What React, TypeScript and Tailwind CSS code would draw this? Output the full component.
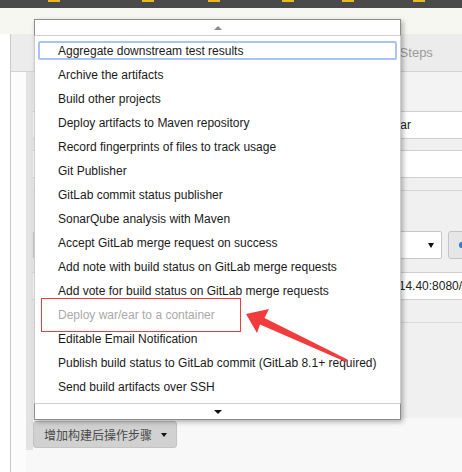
import React from "react";

const items = [
  "Aggregate downstream test results",
  "Archive the artifacts",
  "Build other projects",
  "Deploy artifacts to Maven repository",
  "Record fingerprints of files to track usage",
  "Git Publisher",
  "GitLab commit status publisher",
  "SonarQube analysis with Maven",
  "Accept GitLab merge request on success",
  "Add note with build status on GitLab merge requests",
  "Add vote for build status on GitLab merge requests",
  "Deploy war/ear to a container",
  "Editable Email Notification",
  "Publish build status to GitLab commit (GitLab 8.1+ required)",
  "Send build artifacts over SSH",
];

const marks = [48, 142, 208, 282, 342, 413];

export default function App() {
  return (
    <div className="relative w-[462px] h-[472px] overflow-hidden bg-[#f8f8f8] font-['Liberation_Sans','Noto_Sans_CJK_SC',sans-serif] text-[12px] text-[#222]">
      {/* top dark bar */}
      <div className="relative h-[8px] bg-[#4a4a4a]">
        {marks.map((x) => (
          <span
            key={x}
            className="absolute top-0 h-[2px] w-[12px] bg-[#e9b924]"
            style={{ left: x }}
          />
        ))}
      </div>
      <div className="h-[26px] bg-[#f6f7f1]" />

      {/* main */}
      <div className="flex h-[438px]">
        <div className="w-[10px] shrink-0 bg-white" />
        <div className="flex-1 min-w-0 flex flex-col border-l border-[#c9c9c9] bg-[#f8f8f8]">
          {/* tab bar */}
          <div className="h-[38px] shrink-0 bg-[#ececec] border-b border-[#d3d3d3] flex items-center overflow-hidden">
            <span className="ml-[359px] text-[13px] text-[#9a9a9a] whitespace-nowrap">Post Steps</span>
          </div>
          <div className="flex-1 flex min-w-0">
            <div className="w-[15px] shrink-0 bg-[#fcfcfc]" />
            <div className="flex-1 min-w-0 flex flex-col">
              <div className="h-[378px] flex flex-col border-l-[7px] border-[#e3e3e3] overflow-hidden">
                <div className="h-[39px] shrink-0 bg-[#f3f3f3]" />
                <div className="h-[28px] shrink-0 bg-white border-y border-[#d0d0d0] flex items-center pl-[338px] whitespace-nowrap overflow-hidden">
                  **/*.war
                </div>
                <div className="h-[11px] shrink-0 bg-[#f0f0f0]" />
                <div className="h-[28px] shrink-0 bg-white border-y border-[#d0d0d0]" />
                <div className="h-[13px] shrink-0 bg-[#f0f0f0] border-b border-[#d6d6d6]" />
                <div className="h-[40px] shrink-0 bg-[#f0f0f0]" />
                <div className="h-[28px] shrink-0 bg-[#f0f0f0] flex">
                  <div className="w-[409px] shrink-0 bg-white border border-[#c8c8c8] rounded-[2px] flex items-center justify-end pr-[7px]">
                    <span className="w-0 h-0 border-x-[3px] border-x-transparent border-t-[5px] border-t-[#111]" />
                  </div>
                  <div className="ml-[6px] w-[40px] shrink-0 bg-[#e6e6e6] border border-[#c4c4c4] rounded-[3px] flex items-center pl-[10px]">
                    <span className="w-[5px] h-[6px] rounded-full bg-[#3a7bd5]" />
                  </div>
                </div>
                <div className="h-[13px] shrink-0 bg-[#f0f0f0]" />
                <div className="h-[28px] shrink-0 bg-white border-y border-[#d0d0d0] flex items-center pl-[289px] whitespace-nowrap overflow-hidden">
                  http://192.168.14.40:8080/
                </div>
                <div className="h-[23px] shrink-0 bg-[#f0f0f0] border-b border-[#dadada]" />
                <div className="h-[95px] shrink-0 bg-[#f0f0f0]" />
                <div className="flex-1 bg-[#f8f8f8] pt-[3px]">
                  <div className="h-[27px] w-[144px] bg-[#d1d1d1] border border-[#c3c3c3] rounded-[3px] flex items-center pl-[10px] text-[#4a4a4a] font-['Noto_Sans_CJK_SC',sans-serif] text-[12px]">
                    <span className="leading-none whitespace-nowrap">增加构建后操作步骤</span>
                    <span className="ml-[9px] w-0 h-0 border-x-[3.5px] border-x-transparent border-t-[4px] border-t-[#111]" />
                  </div>
                </div>
              </div>
              <div className="flex-1" />
            </div>
          </div>
        </div>
      </div>

      {/* dropdown menu overlay */}
      <div className="absolute left-[34px] top-[19px] w-[367px] h-[401px] flex flex-col shadow-[2px_2px_5px_rgba(0,0,0,0.3)]">
        <div className="h-[17px] shrink-0 bg-white border border-[#8c8c8c] border-b-[#cfcfcf] flex items-center justify-center">
          <span className="w-0 h-0 border-x-[4px] border-x-transparent border-b-[4px] border-b-[#8a8a8a]" />
        </div>
        <div className="flex-1 bg-white border-x border-[#cccccc] pt-[2px]">
          {items.map((t, i) => (
            <div key={t} className="h-[24px] px-[3px] pt-[3px] pb-[2px]">
              <div
                className={
                  "h-[19px] rounded-[2px] border-2 flex items-center pl-[18px] whitespace-nowrap " +
                  (i === 0 ? "border-[#a6c5f6]" : "border-transparent") +
                  (i === 11 ? " text-[#a9a9a9]" : " text-[#1a1a1a]")
                }
              >
                {t}
              </div>
            </div>
          ))}
        </div>
        <div className="h-[17px] shrink-0 bg-white border border-[#8c8c8c] border-t-[#cfcfcf] flex items-center justify-center">
          <span className="w-0 h-0 border-x-[4px] border-x-transparent border-t-[4px] border-t-[#111]" />
        </div>
      </div>

      {/* annotation */}
      <div className="absolute left-[41px] top-[298px] w-[200px] h-[34px] border border-[#e8403c]" />
      <svg className="absolute left-0 top-0 pointer-events-none" width="462" height="472">
        <polygon
          points="246,314 269,309 264.5,318 347.5,359.6 346,362 260,324.5 257,333"
          fill="#f23b3b"
        />
      </svg>
    </div>
  );
}
